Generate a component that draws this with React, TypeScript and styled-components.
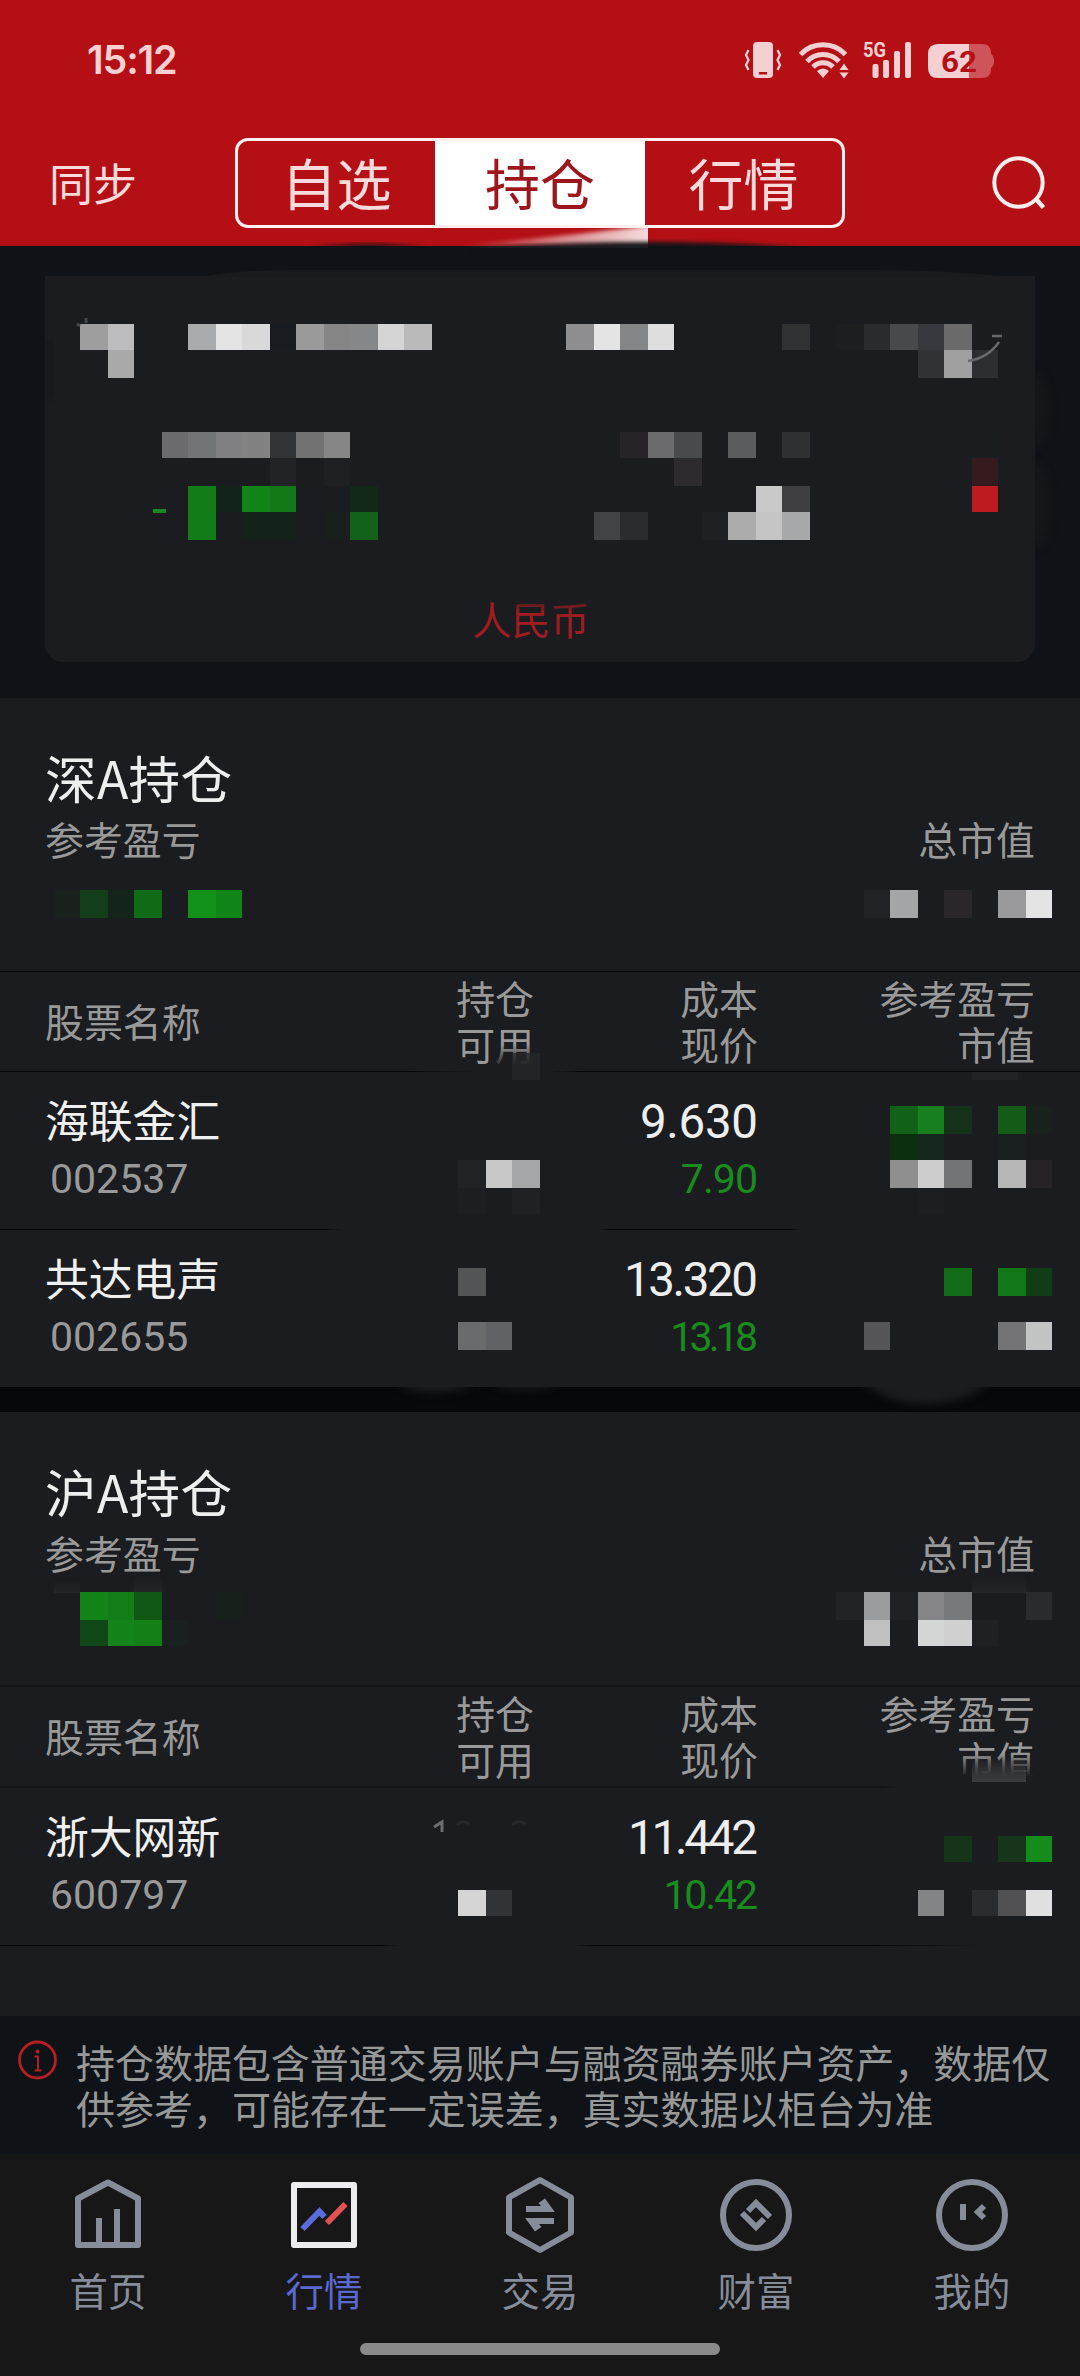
import React from "react";
import styled, { createGlobalStyle } from "styled-components";

const CJK = '"Noto Sans CJK SC", sans-serif';
const NUM = 'Roboto, "Noto Sans CJK SC", sans-serif';
const PANEL = "#1b1c1f";
const DEEP = "#0f1317";

const GlobalStyle = createGlobalStyle`
  * { box-sizing: border-box; }
  html, body { margin: 0; padding: 0; background: ${DEEP}; }
`;

const Screen = styled.div`
  position: relative;
  width: 1080px;
  height: 2376px;
  display: flex;
  flex-direction: column;
  overflow: hidden;
  background: ${DEEP};
  font-family: ${CJK};
`;

const Header = styled.header`
  height: 246px;
  flex: none;
  background: #b40f14;
`;

const StatusBar = styled.div`
  height: 138px;
  padding: 0 86px 18px 87px;
  display: flex;
  align-items: center;
  justify-content: space-between;
`;

const Clock = styled.span`
  font-family: Inter, ${NUM};
  font-size: 39.5px;
  font-weight: 600;
  line-height: 40px;
  letter-spacing: -1.2px;
  color: #fbd0d2;
`;

const TitleBar = styled.div`
  height: 90px;
  padding: 0 34px 0 49px;
  display: grid;
  grid-template-columns: 186px 610px 1fr;
  align-items: center;
`;

const SyncButton = styled.span`
  font-size: 44px;
  line-height: 60px;
  padding-bottom: 2px;
  color: #fbdadb;
`;

const SearchSlot = styled.span`
  display: flex;
  justify-content: flex-end;
`;

const Segments = styled.div`
  height: 90px;
  border: 3px solid #fff0f0;
  border-radius: 13px;
  display: grid;
  grid-template-columns: 197px 210px 197px;
  overflow: hidden;
`;

const Segment = styled.div<{ $active?: boolean }>`
  display: flex;
  align-items: center;
  justify-content: center;
  font-size: 55px;
  line-height: 80px;
  padding-bottom: 4px;
  background: ${(p) => (p.$active ? "#ffffff" : "transparent")};
  color: ${(p) => (p.$active ? "#9c161b" : "#fbdadb")};
`;

const Summary = styled.section`
  height: 452px;
  flex: none;
  padding: 30px 45px 36px;
  display: flex;
`;

const SummaryCard = styled.div`
  flex: 1;
  border-radius: 0 0 18px 18px;
  background: ${PANEL};
  display: flex;
  align-items: flex-end;
  justify-content: center;
  padding-bottom: 17px;
`;

const Currency = styled.span`
  font-size: 39px;
  line-height: 54px;
  color: #a01c20;
  padding-right: 18px;
`;

const Market = styled.section<{ $height: number }>`
  height: ${(p) => p.$height}px;
  flex: none;
  background: ${PANEL};
  display: flex;
  flex-direction: column;
`;

const MarketHead = styled.div`
  height: 273px;
  padding: 49px 45px 0;
`;

const MarketTitle = styled.h2`
  margin: 0;
  font-size: 51.6px;
  font-weight: 400;
  line-height: 60px;
  letter-spacing: 0.3px;
  color: #eeeeee;
`;

const MarketTotals = styled.div`
  display: flex;
  justify-content: space-between;
  margin-top: 8px;
`;

const Label = styled.span`
  font-size: 38.9px;
  line-height: 46px;
  color: #999999;
`;

const Divider = styled.div<{ $paint: string; $h?: number }>`
  height: ${(p) => p.$h ?? 1}px;
  flex: none;
  background: ${(p) => p.$paint};
`;

const ColumnGrid = styled.div`
  display: grid;
  grid-template-columns: 1fr 200px 224px 277px;
  padding: 0 45px;
`;

const TableHead = styled(ColumnGrid)`
  height: 99px;
  align-items: center;
  padding-bottom: 3px;
`;

const HeadCell = styled.div<{ $right?: boolean }>`
  display: flex;
  flex-direction: column;
  align-items: ${(p) => (p.$right ? "flex-end" : "flex-start")};
`;

const Row = styled(ColumnGrid)`
  height: 157px;
`;

const Stack = styled.div<{ $right?: boolean }>`
  display: flex;
  flex-direction: column;
  padding-top: ${(p) => (p.$right ? 23 : 20)}px;
  align-items: ${(p) => (p.$right ? "flex-end" : "flex-start")};
`;

const StockName = styled.span`
  font-size: 43.8px;
  line-height: 54px;
  height: 54px;
  color: #f0f0f0;
`;

const StockCode = styled.span`
  font-family: ${NUM};
  font-size: 41px;
  line-height: 60px;
  padding-left: 5px;
  padding-top: 3px;
  color: #999999;
`;

/* The margin cancels the tracking after the last digit, so figures end on one edge. */
const Cost = styled.span<{ $track: number }>`
  font-family: ${NUM};
  font-size: 47.5px;
  line-height: 54px;
  letter-spacing: ${(p) => p.$track}px;
  margin-right: ${(p) => -p.$track}px;
  color: #eeeeee;
`;

const Price = styled(Cost)`
  font-size: 41px;
  line-height: 60px;
  color: #188c1d;
`;

const Gap = styled.div`
  height: 25px;
  flex: none;
  background: #07080b;
`;

const Notice = styled.aside`
  height: 138px;
  flex: none;
  padding: 22px 0 0 17px;
  display: grid;
  grid-template-columns: 59px 980px;
  background: ${DEEP};
`;

const NoticeIcon = styled.span`
  padding-top: 1px;
`;

const NoticeText = styled.p`
  margin: 0;
  font-size: 38.98px;
  line-height: 46px;
  white-space: nowrap;
  color: #979898;
`;

const NavBar = styled.nav`
  height: 222px;
  flex: none;
  background: #171717;
  display: flex;
  flex-direction: column;
  align-items: center;
`;

const NavItems = styled.div`
  width: 100%;
  height: 189px;
  display: grid;
  grid-template-columns: repeat(5, 1fr);
`;

const NavItem = styled.div<{ $active?: boolean }>`
  display: flex;
  flex-direction: column;
  align-items: center;
  padding-top: 21px;
  font-size: 38.4px;
  line-height: 50px;
  gap: 9px;
  color: ${(p) => (p.$active ? "#5a68cf" : "#878c9a")};
`;

const HomeIndicator = styled.div`
  width: 360px;
  height: 12px;
  border-radius: 6px;
  background: #8a8a8a;
`;

const Overlay = styled.svg`
  position: absolute;
  left: 0;
  top: 0;
  pointer-events: none;
`;

/* Cells of the privacy mosaic: row -> [column, colour], on a 27px grid snapped to even pixels. */
const CELL = 27;
const edge = (n: number) => Math.floor((n * CELL) / 2) * 2;

const MOSAIC: Record<number, [number, string][]> = {
  12: [
    [3, "#9e9e9e"], [4, "#bcbcbe"], [7, "#a9aaac"], [8, "#e4e4e4"], [9, "#d9d9d9"], [10, "#181c21"],
    [11, "#9a9a9a"], [12, "#858585"], [13, "#868788"], [14, "#d5d5d5"], [15, "#bababa"],
    [21, "#8e8e90"], [22, "#e4e4e4"], [23, "#848586"], [24, "#dedede"], [29, "#303132"], [31, "#1d1e20"],
    [32, "#2a2b2f"], [33, "#48494c"], [34, "#38393e"], [35, "#6a6a6b"],
  ],
  13: [[4, "#a9a9a9"], [34, "#313236"], [35, "#a0a0a1"], [36, "#2d2e31"]],
  16: [
    [6, "#6b6b6d"], [7, "#727476"], [8, "#808083"], [9, "#828282"], [10, "#333435"], [11, "#727272"],
    [12, "#868686"], [23, "#262428"], [24, "#6c6c6f"], [25, "#484a4b"], [27, "#5a5c5e"], [29, "#2f3031"],
    [36, "#191d20"],
  ],
  17: [[10, "#222327"], [12, "#1e1f22"], [25, "#2d2b30"], [36, "#351a1d"]],
  18: [
    [7, "#127c18"], [8, "#12241a"], [9, "#118417"], [10, "#147819"], [13, "#122918"], [28, "#c9c9c9"],
    [29, "#403f44"], [36, "#be1b20"],
  ],
  19: [
    [7, "#127c18"], [9, "#142319"], [10, "#14231a"], [12, "#19201c"], [13, "#126319"], [22, "#424346"],
    [23, "#2b2c2f"], [26, "#1f2024"], [27, "#acacac"], [28, "#c5c5c5"], [29, "#a7a8aa"],
  ],
  33: [
    [2, "#1a211c"], [3, "#143d19"], [4, "#13251a"], [5, "#106b16"], [7, "#129118"], [8, "#128518"],
    [32, "#212226"], [33, "#a4a5a7"], [35, "#29272b"], [37, "#9a9a9c"], [38, "#e4e4e4"],
  ],
  41: [[33, "#116216"], [34, "#18801f"], [35, "#15311a"], [37, "#135b17"], [38, "#1a201c"]],
  42: [[33, "#0c300f"], [34, "#16271e"], [37, "#1a1f1f"]],
  43: [
    [17, "#212226"], [18, "#c8c8c8"], [19, "#a5a6a8"], [33, "#8f8f8f"], [34, "#cdcdcd"], [35, "#727375"],
    [37, "#b7b7b7"], [38, "#252328"],
  ],
  44: [[17, "#1d1e21"], [19, "#202124"], [34, "#1d1e21"]],
  47: [[17, "#535455"], [35, "#126c17"], [37, "#127817"], [38, "#103d14"]],
  49: [[17, "#6a6b6c"], [18, "#616266"], [32, "#56555a"], [37, "#747476"], [38, "#c3c4c4"]],
  59: [
    [3, "#128418"], [4, "#127e17"], [5, "#115816"], [8, "#18201c"], [31, "#222327"], [32, "#9b9c9e"],
    [33, "#202125"], [34, "#858587"], [35, "#78797b"], [38, "#2a2b2f"],
  ],
  60: [
    [3, "#104716"], [4, "#14841a"], [5, "#147f17"], [6, "#1a1f1f"], [32, "#c0c0c0"], [34, "#d5d7d7"],
    [35, "#d0d0d0"], [36, "#1f2024"],
  ],
  68: [[35, "#143517"], [37, "#15361a"], [38, "#148c1b"]],
  70: [[17, "#d5d5d5"], [18, "#323337"], [34, "#838486"], [36, "#2b2c2f"], [37, "#515153"], [38, "#e0e0e0"]],
};

function Smudges() {
  return (
    <Overlay width="1080" height="2376" viewBox="0 0 1080 2376">
      <defs>
        <linearGradient id="streak" x1="0" x2="1" y1="0" y2="0">
          <stop offset="0" stopColor="#fff" stopOpacity="0" />
          <stop offset="0.5" stopColor="#fff" stopOpacity="0.5" />
          <stop offset="1" stopColor="#fff" stopOpacity="0.9" />
        </linearGradient>
        <linearGradient id="fadeDown" x1="0" x2="0" y1="0" y2="1">
          <stop offset="0" stopColor={PANEL} stopOpacity="0" />
          <stop offset="1" stopColor={PANEL} stopOpacity="1" />
        </linearGradient>
        <linearGradient id="fadeUp" x1="0" x2="0" y1="0" y2="1">
          <stop offset="0" stopColor={PANEL} stopOpacity="0.9" />
          <stop offset="1" stopColor={PANEL} stopOpacity="0" />
        </linearGradient>
        <linearGradient id="greyDown" x1="0" x2="0" y1="0" y2="1">
          <stop offset="0" stopColor="#444547" stopOpacity="0" />
          <stop offset="1" stopColor="#3c3d3f" stopOpacity="1" />
        </linearGradient>
        <linearGradient id="faintDown" x1="0" x2="0" y1="0" y2="1">
          <stop offset="0" stopColor="#242527" stopOpacity="0" />
          <stop offset="1" stopColor="#242527" stopOpacity="1" />
        </linearGradient>
        <filter id="soft" x="-20%" y="-50%" width="140%" height="200%" colorInterpolationFilters="sRGB">
          <feGaussianBlur stdDeviation="2" />
        </filter>
        <filter id="softer" x="-60%" y="-80%" width="220%" height="260%" colorInterpolationFilters="sRGB">
          <feGaussianBlur stdDeviation="4" />
        </filter>
        <clipPath id="gapClip">
          <rect x="0" y="1387" width="1080" height="25" />
        </clipPath>
        <clipPath id="sideClip">
          <rect x="1035" y="340" width="45" height="240" />
        </clipPath>
        <clipPath id="streakClip">
          <rect x="440" y="228" width="208" height="20" />
        </clipPath>
      </defs>

      <path d="M455 246 Q570 236 660 224 L660 246 Z" fill="url(#streak)" filter="url(#soft)" clipPath="url(#streakClip)" />
      <path d="M470 249 Q560 242 650 242 Q740 242 812 249 Z" fill={DEEP} filter="url(#soft)" />
      <path d="M310 248 Q370 240 425 248 Z" fill={DEEP} filter="url(#soft)" />
      <path d="M200 277 Q240 270 290 270 L880 270 Q960 271 1010 277 Z" fill="#191a1d" />
      <g clipPath="url(#sideClip)">
        <ellipse cx="1034" cy="410" rx="15" ry="36" fill="#15181b" filter="url(#softer)" />
        <ellipse cx="1034" cy="506" rx="16" ry="42" fill="#15181b" filter="url(#softer)" />
      </g>
      <rect x="46" y="340" width="6" height="58" fill="#17181b" filter="url(#soft)" />

      <rect x="515" y="596" width="75" height="17" fill="url(#fadeUp)" />

      <rect x="495" y="1044" width="46" height="24" fill="url(#fadeDown)" />
      <rect x="495" y="1067" width="46" height="4" fill={PANEL} />
      <rect x="512" y="1053" width="28" height="27" fill="#26272a" fillOpacity="0.75" />
      <rect x="972" y="1072" width="46" height="8" fill="#222326" />
      <rect x="955" y="1753" width="85" height="24" fill="url(#fadeDown)" />
      <rect x="955" y="1776" width="85" height="9" fill={PANEL} />
      <rect x="972" y="1757" width="54" height="25" fill="url(#greyDown)" />

      <rect x="54" y="1580" width="26" height="13" fill="url(#faintDown)" />
      <rect x="134" y="1576" width="28" height="17" fill="url(#faintDown)" />
      <rect x="972" y="1576" width="54" height="17" fill="url(#faintDown)" />

      <g shapeRendering="crispEdges">
        {Object.entries(MOSAIC).map(([key, cells]) => {
          const row = Number(key);
          return cells.map(([col, fill]) => (
            <rect
              key={`${row}-${col}`}
              x={edge(col)}
              y={edge(row)}
              width={edge(col + 1) - edge(col)}
              height={edge(row + 1) - edge(row)}
              fill={fill}
            />
          ));
        })}
        <rect x="153" y="509" width="13" height="4" fill="#1b8721" />
      </g>

      <path d="M86 318 L86 323 M77 324 L80 326" stroke="#45464a" strokeWidth="3" />
      <path d="M968 361 Q988 358 999 342" fill="none" stroke="#68696b" strokeWidth="2.500" />
      <path d="M992 336 L1002 336" stroke="#68696b" strokeWidth="2.500" />
      <path d="M434 1827 L442 1822 L442 1832" fill="none" stroke="#6c6d6f" strokeWidth="3" />
      <path d="M457 1825 Q462 1819 469 1824 M512 1825 Q518 1819 526 1824" fill="none" stroke="#27282b" strokeWidth="3" />

      <g clipPath="url(#gapClip)">
        <ellipse cx="435" cy="1384" rx="34" ry="8" fill={PANEL} filter="url(#softer)" />
        <ellipse cx="525" cy="1383" rx="30" ry="6" fill={PANEL} filter="url(#softer)" />
        <path d="M862 1380 Q885 1404 925 1404 Q967 1404 992 1380 Z" fill={PANEL} filter="url(#softer)" />
      </g>
    </Overlay>
  );
}

function StatusIcons() {
  const c = "#f4d0d2";
  return (
    <svg width="250" height="44" viewBox="744 38 250 44">
      <rect x="753" y="42" width="20" height="36" rx="4" fill={c} />
      <rect x="759" y="72" width="8" height="2.5" fill="#b40f14" />
      <path d="M748.500 50 l-2.500 5 l2.500 5 l-2.500 5 l2.500 5 M777.500 50 l2.500 5 l-2.500 5 l2.500 5 l-2.500 5" fill="none" stroke={c} strokeWidth="2.300" />
      <g fill="none" stroke={c} strokeWidth="5">
        <path d="M800.5 54.5 A31 31 0 0 1 845.500 54.500" />
        <path d="M807 61.500 A22 22 0 0 1 839 61.500" />
        <path d="M813 67 A14 14 0 0 1 833 67" />
      </g>
      <path d="M817 71 Q823 66 829 71 L823 78 Z" fill={c} />
      <path d="M839.500 70 L844 63.500 L848.500 70 Z M839.500 72.500 L848.500 72.500 L844 78.500 Z" fill={c} />
      <text x="863" y="56.500" fontFamily="Roboto, sans-serif" fontWeight="700" fontSize="21" textLength="23" lengthAdjust="spacingAndGlyphs" fill={c}>
        5G
      </text>
      <g fill={c}>
        <rect x="872.500" y="64" width="6" height="14" rx="2" />
        <rect x="883" y="60" width="6" height="18" rx="2" />
        <rect x="894" y="51" width="6" height="27" rx="2" />
        <rect x="905" y="42" width="6" height="36" rx="2" />
      </g>
      <path d="M969 44 H982 Q991 44 991 53 V54 Q994 56 994 61 Q994 66 991 68 V69 Q991 78 982 78 H969 Z" fill="#cf5459" />
      <path d="M969 44 H938 Q928 44 928 54 V68 Q928 78 938 78 H969 Z" fill={c} />
      <text x="941" y="72" fontFamily="Roboto, sans-serif" fontWeight="700" fontSize="30" textLength="36" lengthAdjust="spacingAndGlyphs" fill="#b40f14">
        62
      </text>
    </svg>
  );
}

const SearchIcon = () => (
  <svg width="54" height="56" viewBox="992 154 54 56">
    <circle cx="1018.500" cy="181.500" r="24.200" fill="none" stroke="#fdeeee" strokeWidth="4" />
    <path d="M1035 197 L1043.500 206.500" stroke="#fdeeee" strokeWidth="4.500" />
  </svg>
);

const InfoIcon = () => (
  <svg width="42" height="42" viewBox="0 0 42 42" fill="none" stroke="#b41e24" strokeWidth="2.800">
    <circle cx="20.500" cy="21" r="18" />
    <circle cx="20.500" cy="12.500" r="2" fill="#b41e24" stroke="none" />
    <path d="M17.500 17.500 H21 V31 M17.500 31.500 H24.500" strokeWidth="2" />
  </svg>
);

const S = "#878c9a";

const HomeIcon = () => (
  <svg width="80" height="80" viewBox="68 2175 80 80" fill="none" stroke={S} strokeWidth="6" strokeLinejoin="round">
    <path d="M78 2198.500 L108 2182.500 L138 2198.500 V2245 H78 Z" />
    <path d="M99 2245 V2218 M117 2245 V2209" />
  </svg>
);

const QuotesIcon = () => (
  <svg width="80" height="80" viewBox="284 2175 80 80" fill="none" strokeWidth="6">
    <rect x="294" y="2185" width="60" height="60" stroke="#ededf0" strokeLinejoin="round" />
    <path d="M302.500 2229 L319.500 2211.500 L324.500 2217" stroke="#5a6bdc" />
    <path d="M327 2223 L345.500 2204" stroke="#e25252" />
  </svg>
);

const TradeIcon = () => (
  <svg width="80" height="80" viewBox="500 2175 80 80">
    <path
      d="M509 2197.500 L540 2180 L571 2197.500 V2232.500 L540 2250 L509 2232.500 Z"
      fill="none"
      stroke={S}
      strokeWidth="6"
      strokeLinejoin="round"
    />
    <path d="M526 2206 H541 L538.500 2203 L545 2198.500 L554.800 2212 H526 Z" fill={S} />
    <path d="M554 2224 H539 L541.500 2227 L535 2231.500 L525.200 2218 H554 Z" fill={S} />
  </svg>
);

const WealthIcon = () => (
  <svg width="80" height="80" viewBox="716 2175 80 80" fill="none" stroke={S} strokeWidth="6">
    <circle cx="756" cy="2215" r="33" />
    <path d="M748 2211 L756 2203 L770 2217" />
    <path d="M764 2219 L756 2227 L742 2213" />
  </svg>
);

const MineIcon = () => (
  <svg width="80" height="80" viewBox="932 2175 80 80" fill="none" stroke={S} strokeWidth="6">
    <circle cx="972" cy="2215" r="33" />
    <path d="M963 2204 V2220" />
    <path d="M984 2206 L978 2212 L984 2218" />
  </svg>
);

const LINE = "#060709";
const LINE_DIM = "#121316";

interface Holding {
  name: string;
  code: string;
  cost: string;
  price: string;
  costTrack: number;
  priceTrack: number;
  line?: string;
}

interface MarketData {
  title: string;
  height: number;
  lineHeight: number;
  topLine: string;
  headLine: string;
  holdings: Holding[];
}

const MARKETS: MarketData[] = [
  {
    title: "深A持仓",
    height: 689,
    lineHeight: 1,
    topLine: LINE,
    headLine: `linear-gradient(90deg, ${LINE} 410px, transparent 475px, transparent 552px, ${LINE} 580px)`,
    holdings: [
      {
        name: "海联金汇", code: "002537", cost: "9.630", price: "7.90", costTrack: -0.3, priceTrack: -0.9,
        line: `linear-gradient(90deg, ${LINE} 322px, transparent 343px, transparent 598px, ${LINE} 612px, ${LINE} 788px, transparent 804px)`,
      },
      { name: "共达电声", code: "002655", cost: "13.320", price: "13.18", costTrack: -2.4, priceTrack: -3.8 },
    ],
  },
  {
    title: "沪A持仓",
    height: 604,
    lineHeight: 2,
    topLine: LINE_DIM,
    headLine: `linear-gradient(90deg, ${LINE_DIM} 880px, transparent 900px)`,
    holdings: [
      {
        name: "浙大网新", code: "600797", cost: "11.442", price: "10.42", costTrack: -3.2, priceTrack: -2.1,
        line: `linear-gradient(90deg, ${LINE} 380px, transparent 400px, transparent 574px, ${LINE} 592px, ${LINE} 870px, transparent 985px)`,
      },
    ],
  },
];

function MarketSection({ data }: { data: MarketData }) {
  return (
    <Market $height={data.height}>
      <MarketHead>
        <MarketTitle>{data.title}</MarketTitle>
        <MarketTotals>
          <Label>参考盈亏</Label>
          <Label>总市值</Label>
        </MarketTotals>
      </MarketHead>
      <Divider $paint={data.topLine} $h={data.lineHeight} />
      <TableHead>
        <HeadCell>
          <Label>股票名称</Label>
        </HeadCell>
        <HeadCell $right>
          <Label>持仓</Label>
          <Label>可用</Label>
        </HeadCell>
        <HeadCell $right>
          <Label>成本</Label>
          <Label>现价</Label>
        </HeadCell>
        <HeadCell $right>
          <Label>参考盈亏</Label>
          <Label>市值</Label>
        </HeadCell>
      </TableHead>
      <Divider $paint={data.headLine} $h={data.lineHeight} />
      {data.holdings.map((h) => (
        <React.Fragment key={h.code}>
          <Row>
            <Stack>
              <StockName>{h.name}</StockName>
              <StockCode>{h.code}</StockCode>
            </Stack>
            <span />
            <Stack $right>
              <Cost $track={h.costTrack}>{h.cost}</Cost>
              <Price $track={h.priceTrack}>{h.price}</Price>
            </Stack>
          </Row>
          {h.line && <Divider $paint={h.line} />}
        </React.Fragment>
      ))}
    </Market>
  );
}

const NAV = [
  { label: "首页", Icon: HomeIcon },
  { label: "行情", Icon: QuotesIcon, active: true },
  { label: "交易", Icon: TradeIcon },
  { label: "财富", Icon: WealthIcon },
  { label: "我的", Icon: MineIcon },
];

export default function App() {
  return (
    <>
      <GlobalStyle />
      <Screen>
        <Header>
          <StatusBar>
            <Clock>15:12</Clock>
            <StatusIcons />
          </StatusBar>
          <TitleBar>
            <SyncButton>同步</SyncButton>
            <Segments>
              <Segment>自选</Segment>
              <Segment $active>持仓</Segment>
              <Segment>行情</Segment>
            </Segments>
            <SearchSlot>
              <SearchIcon />
            </SearchSlot>
          </TitleBar>
        </Header>
        <Summary>
          <SummaryCard>
            <Currency>人民币</Currency>
          </SummaryCard>
        </Summary>
        <MarketSection data={MARKETS[0]} />
        <Gap />
        <MarketSection data={MARKETS[1]} />
        <Notice>
          <NoticeIcon>
            <InfoIcon />
          </NoticeIcon>
          <NoticeText>
            持仓数据包含普通交易账户与融资融券账户资产，数据仅
            <br />
            供参考，可能存在一定误差，真实数据以柜台为准
          </NoticeText>
        </Notice>
        <NavBar>
          <NavItems>
            {NAV.map(({ label, Icon, active }) => (
              <NavItem key={label} $active={active}>
                <Icon />
                <span>{label}</span>
              </NavItem>
            ))}
          </NavItems>
          <HomeIndicator />
        </NavBar>
        <Smudges />
      </Screen>
    </>
  );
}
